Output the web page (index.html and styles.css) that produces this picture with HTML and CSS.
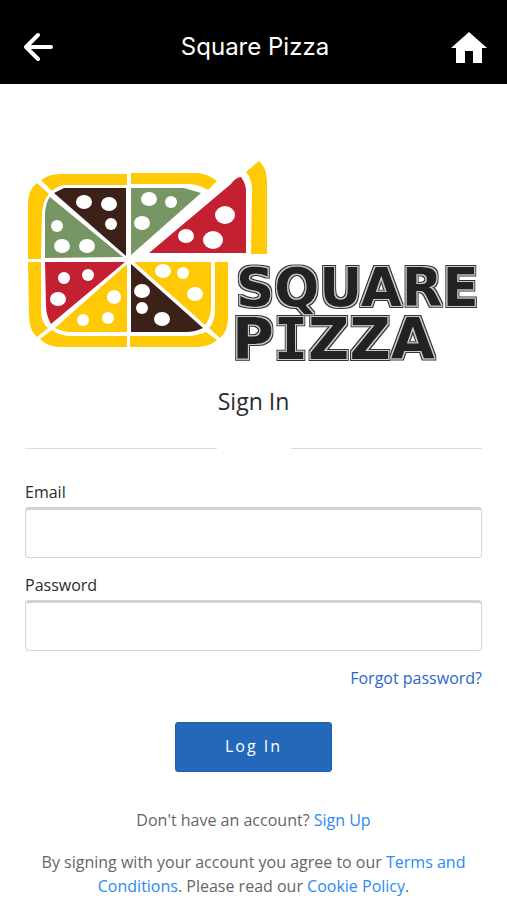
FILE: index.html
```
<!DOCTYPE html>
<html lang="en">
<head>
    <meta charset="UTF-8">
    <meta name="viewport" content="width=device-width, initial-scale=1.0">
    <title>Square Pizza - Sign In</title>
    <link rel="stylesheet" href="styles.css">
</head>
<body>
    <header class="topbar">
        <a href="#" class="topbar-link" aria-label="Back">
            <svg width="30" height="30" viewBox="0 0 30 30" fill="none" stroke="#fff" stroke-width="4" stroke-linecap="round" stroke-linejoin="round">
                <path d="M28 15H3M15 3L3 15L15 27"/>
            </svg>
        </a>
        <div class="topbar-title">Square Pizza</div>
        <a href="#" class="topbar-link" aria-label="Home">
            <svg width="36" height="31" viewBox="0 0 36 31" fill="#fff">
                <path d="M18 0L36 16H31V31H22V19H14V31H5V16H0Z"/>
            </svg>
        </a>
    </header>

    <main class="content">
        <svg class="logo" viewBox="25 158 457 206" role="img" aria-label="Square Pizza">
            <defs>
                <!-- sketched lettering: dark core, light gap, dark outline -->
                <filter id="sketch" filterUnits="userSpaceOnUse" x="225" y="255" width="257" height="109">
                    <feMorphology in="SourceAlpha" operator="dilate" radius="2" result="outer"/>
                    <feFlood flood-color="#333"/>
                    <feComposite in2="outer" operator="in" result="outline"/>
                    <feMorphology in="SourceAlpha" operator="dilate" radius="1" result="inner"/>
                    <feFlood flood-color="#ccc"/>
                    <feComposite in2="inner" operator="in" result="gap"/>
                    <feMerge>
                        <feMergeNode in="outline"/>
                        <feMergeNode in="gap"/>
                        <feMergeNode in="SourceGraphic"/>
                    </feMerge>
                </filter>
            </defs>
            <!-- crust -->
            <g fill="#ffc905">
                <path d="M28 259V203Q28 190 37 183L49 194Q43 200 42 213L41 259Z"/>
                <path d="M41 180Q49 174 60 174H127V185H64Q57 186 52 191Z"/>
                <path d="M131 173H198Q208 174 217 181L208 190Q200 185 190 184H131Z"/>
                <path d="M246 172L259 161Q267 168 267 182V254H251L252 190Q252 179 246 172Z"/>
                <path d="M28 262H41V311Q41 322 48 328L37 337Q29 331 29 314Z"/>
                <path d="M40 339L52 330Q58 335 69 336H127V347H60Q48 347 40 339Z"/>
                <path d="M130 336H189Q199 335 206 332L217 340Q209 347 197 347H130Z"/>
                <path d="M215 262H228V318Q228 331 220 338L209 328Q215 322 215 309Z"/>
            </g>
            <!-- slices -->
            <path fill="#789663" d="M50 197L123 257L45 258V212Q46 202 50 197Z"/>
            <path fill="#3b2117" d="M54 193L64 188H126V256Z"/>
            <path fill="#789663" d="M131 188H184L201 193L131 255Z"/>
            <path fill="#c32032" d="M149 253L231 184Q236 177 241 177Q246 184 246 191V253Z"/>
            <path fill="#c32032" d="M45 262H125L51 324Q46 315 46 306Z"/>
            <path fill="#ffc905" d="M127 264V332H68Q61 331 55 328Z"/>
            <path fill="#3b2117" d="M131 264L203 328Q195 332 186 332H131Z"/>
            <path fill="#ffc905" d="M134 262H211V306Q211 318 205 325Z"/>
            <!-- toppings -->
            <g fill="#fff">
                <ellipse cx="84" cy="202" rx="8" ry="7"/>
                <ellipse cx="109" cy="204" rx="8" ry="7"/>
                <circle cx="111" cy="224" r="6"/>
                <circle cx="57" cy="226" r="6"/>
                <ellipse cx="62" cy="246" rx="8" ry="7"/>
                <ellipse cx="87" cy="246" rx="8" ry="7"/>
                <ellipse cx="149" cy="199" rx="8" ry="7"/>
                <circle cx="171" cy="202" r="6"/>
                <ellipse cx="142" cy="223" rx="8" ry="7"/>
                <ellipse cx="225" cy="215" rx="10" ry="9"/>
                <ellipse cx="186" cy="236" rx="8" ry="7"/>
                <ellipse cx="213" cy="240" rx="10" ry="9"/>
                <circle cx="64" cy="278" r="6"/>
                <circle cx="88" cy="275" r="6"/>
                <ellipse cx="58" cy="299" rx="8" ry="7"/>
                <circle cx="114" cy="297" r="7"/>
                <circle cx="83" cy="320" r="6"/>
                <circle cx="108" cy="318" r="6"/>
                <ellipse cx="142" cy="291" rx="8" ry="7"/>
                <circle cx="142" cy="308" r="6"/>
                <ellipse cx="162" cy="319" rx="8" ry="7"/>
                <ellipse cx="163" cy="271" rx="8" ry="7"/>
                <circle cx="183" cy="273" r="6"/>
                <ellipse cx="195" cy="294" rx="8" ry="7"/>
            </g>
            <g class="lettering" filter="url(#sketch)">
                <text x="236" y="306" font-size="53">SQUARE</text>
                <text x="232" y="359" font-size="57">P<tspan class="slab">I</tspan>ZZA</text>
            </g>
        </svg>

        <h1 class="heading">Sign In</h1>

        <div class="divider">
            <span class="line"></span>
            <span class="line"></span>
        </div>

        <form class="login-form">
            <div class="field">
                <label for="email">Email</label>
                <input type="email" id="email" name="email">
            </div>
            <div class="field">
                <label for="password">Password</label>
                <input type="password" id="password" name="password">
            </div>
            <a href="#" class="forgot">Forgot password?</a>
            <button type="submit" class="login-btn">Log In</button>
        </form>

        <p class="note">Don't have an account? <a href="#">Sign Up</a></p>
        <p class="note terms">By signing with your account you agree to our <a href="#">Terms and Conditions</a>. Please read our <a href="#">Cookie Policy</a>.</p>
    </main>
</body>
</html>
```
FILE: styles.css
```
* {
    box-sizing: border-box;
}
body {
    font-family: "Open Sans", sans-serif;
    font-size: 16px;
    line-height: 24px;
    margin: 0;
    color: #2b2b2b;
    background-color: #fff;
}
a {
    color: #2a8af6;
    text-decoration: none;
}
.topbar {
    display: flex;
    align-items: center;
    justify-content: space-between;
    height: 84px;
    padding: 10px 20px 0 23px;
    background-color: #000;
}
.topbar-link {
    display: flex;
    width: 36px;
}
.topbar-title {
    font-family: Inter, sans-serif;
    font-size: 24px;
    color: #fff;
}
.content {
    padding: 74px 25px 0;
}
.logo {
    display: block;
    width: 100%;
}
.lettering {
    font-family: "DejaVu Sans", sans-serif;
    font-weight: bold;
    fill: #222;
}
.slab {
    font-family: "DejaVu Sans Mono", monospace;
}
.heading {
    margin: 20px 0 30px;
    font-size: 23px;
    font-weight: normal;
    line-height: 34px;
    text-align: center;
}
.divider {
    display: flex;
    gap: 74px;
}
.line {
    flex: 1;
    border-top: 1px solid #ddd;
}
.login-form {
    display: flex;
    flex-direction: column;
    margin-top: 31px;
}
.field {
    display: flex;
    flex-direction: column;
    gap: 3px;
    margin-bottom: 15px;
}
.field input {
    height: 51px;
    padding: 0 12px;
    border: 1px solid #d6d6d6;
    border-top: 3px solid #d3d3d3;
    border-radius: 4px;
    font: inherit;
}
.forgot {
    align-self: flex-end;
    color: #2a66d0;
}
.login-btn {
    align-self: center;
    width: 157px;
    height: 50px;
    margin-top: 32px;
    padding-bottom: 3px;
    border: 1px solid #1f60ae;
    border-radius: 3px;
    background-color: #2468ba;
    color: #fff;
    font: inherit;
    font-weight: 500;
    letter-spacing: 2px;
}
.note {
    margin: 36px 0 0;
    color: #666;
    text-align: center;
}
.terms {
    margin-top: 18px;
}
```
